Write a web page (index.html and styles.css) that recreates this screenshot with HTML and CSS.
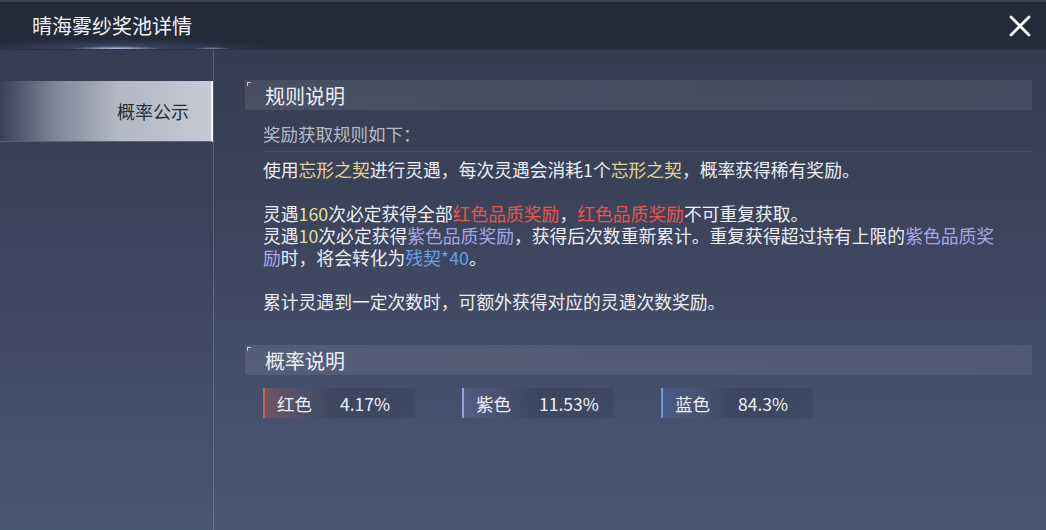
FILE: index.html
```html
<!DOCTYPE html>
<html lang="zh-CN">
<head>
<meta charset="utf-8">
<title>晴海雾纱奖池详情</title>
<link rel="stylesheet" href="styles.css">
</head>
<body>
<div class="app">
  <header class="topbar">
    <h1 class="title">晴海雾纱奖池详情</h1>
    <button class="close" aria-label="关闭">
      <svg width="22" height="22" viewBox="0 0 22 22"><path d="M2 2 L20 20 M20 2 L2 20" stroke="#ffffff" stroke-width="2.8" stroke-linecap="round" fill="none"/></svg>
    </button>
  </header>
  <div class="main">
    <aside class="sidebar">
      <div class="tab active">概率公示</div>
    </aside>
    <section class="content">
      <div class="sec-head">规则说明</div>
      <div class="sub">奖励获取规则如下：</div>
      <div class="rules">
        <p>使用<span class="y">忘形之契</span>进行灵遇，每次灵遇会消耗1个<span class="y">忘形之契</span>，概率获得稀有奖励。</p>
        <p>灵遇<span class="n">160</span>次必定获得全部<span class="r">红色品质奖励</span>，<span class="r">红色品质奖励</span>不可重复获取。<br>灵遇<span class="n">10</span>次必定获得<span class="p">紫色品质奖励</span>，获得后次数重新累计。重复获得超过持有上限的<span class="p">紫色品质奖励</span>时，将会转化为<span class="b">残契*40</span>。</p>
        <p>累计灵遇到一定次数时，可额外获得对应的灵遇次数奖励。</p>
      </div>
      <div class="sec-head sec-2">概率说明</div>
      <div class="chips">
        <div class="chip chip-red"><span class="lbl">红色</span><span class="val">4.17%</span></div>
        <div class="chip chip-purple"><span class="lbl">紫色</span><span class="val">11.53%</span></div>
        <div class="chip chip-blue"><span class="lbl">蓝色</span><span class="val">84.3%</span></div>
      </div>
    </section>
  </div>
</div>
</body>
</html>
```

FILE: styles.css
```css
* { box-sizing: border-box; }
html, body { margin: 0; padding: 0; }
body {
  width: 1046px;
  height: 530px;
  overflow: hidden;
  font-family: "Noto Sans CJK SC", "Noto Sans", sans-serif;
  background: linear-gradient(180deg, #343a4f 0%, #3a4259 35%, #44506b 75%, #4a5876 100%);
  color: #eceef3;
}
.app { width: 1046px; height: 530px; display: flex; flex-direction: column; }

.topbar {
  height: 50px;
  flex: none;
  display: flex;
  align-items: center;
  justify-content: space-between;
  padding: 0 15px 0 32px;
  border-top: 2px solid #3b4254;
  background:
    radial-gradient(ellipse 45px 3px at 117px 100%, rgba(200,215,255,0.9), rgba(200,215,255,0) 100%),
    radial-gradient(ellipse 20px 2px at 212px 100%, rgba(200,215,255,0.6), rgba(200,215,255,0) 100%),
    radial-gradient(ellipse 160px 10px at 117px 100%, rgba(120,140,200,0.35), rgba(120,140,200,0) 100%),
    #232a3a;
  border-bottom: 1px solid #2a3142;
}
.title {
  margin: 0;
  font-size: 20px;
  font-weight: 400;
  color: #f2f4f8;
  line-height: 1;
}
.close {
  width: 22px; height: 22px;
  padding: 0; margin: 0;
  border: 0; background: none;
  display: flex;
}

.main { flex: 1; display: flex; }

.sidebar {
  width: 214px;
  flex: none;
  padding-top: 31px;
  border-right: 1px solid rgba(200,210,235,0.22);
  background: linear-gradient(180deg, rgba(60,62,90,0.25), rgba(60,70,100,0.05));
}
.tab {
  height: 61px;
  display: flex;
  align-items: center;
  justify-content: flex-end;
  padding-right: 22px;
  font-size: 18px;
  color: #282c36;
  background: linear-gradient(90deg, rgba(60,66,90,0.2) 0%, #7d8296 25%, #b3b7c4 55%, #c7cad4 100%);
  border-right: 2px solid #f2f3f6;
  border-bottom: 1px solid #5c6170;
}

.content {
  flex: 1;
  padding: 30px 14px 0 31px;
}
.sec-head {
  height: 30px;
  display: flex;
  align-items: center;
  padding-left: 20px;
  font-size: 20px;
  color: #edeff4;
  background: linear-gradient(90deg, rgba(255,255,255,0.09), rgba(255,255,255,0.07));
  position: relative;
}
.sec-head::before {
  content: "";
  position: absolute;
  left: 2px; top: 2px;
  width: 3px; height: 3px;
  border-top: 1px solid rgba(255,255,255,0.7);
  border-left: 1px solid rgba(255,255,255,0.7);
}
.sub {
  margin: 12px 0 0 18px;
  font-size: 17.5px;
  line-height: 24px;
  color: #b7bbc8;
  padding-bottom: 5px;
  border-bottom: 1px solid rgba(255,255,255,0.07);
}
.rules {
  margin: 6px 30px 0 18px;
  font-size: 17.8px;
  line-height: 22px;
  color: #eceef3;
}
.rules p { margin: 0 0 22px 0; }
.rules p:last-child { margin-bottom: 0; }
.y { color: #e3d590; }
.n { color: #e6dca2; }
.r { color: #ec5548; }
.p { color: #a5a8e6; }
.b { color: #6f9de3; }

.sec-2 { margin-top: 33px; }

.chips {
  display: flex;
  gap: 47px;
  margin: 13px 0 0 18px;
}
.chip {
  width: 152px;
  height: 30px;
  display: flex;
  align-items: center;
  border-left: 2px solid;
  font-size: 17.5px;
  color: #eef0f5;
}
.lbl { width: 75px; padding-left: 12px; flex: none; }
.val { flex: none; }
.chip-red {
  border-color: #d0634f;
  background: linear-gradient(90deg, rgba(190,95,90,0.35) 0%, rgba(110,80,95,0.22) 25%, rgba(36,42,60,0.26) 50%, rgba(36,42,60,0.18) 100%);
}
.chip-purple {
  border-color: #9a9fe0;
  background: linear-gradient(90deg, rgba(120,120,190,0.3) 0%, rgba(80,85,130,0.2) 25%, rgba(36,42,60,0.26) 50%, rgba(36,42,60,0.18) 100%);
}
.chip-blue {
  border-color: #6e94da;
  background: linear-gradient(90deg, rgba(90,120,190,0.3) 0%, rgba(70,90,140,0.2) 25%, rgba(36,42,60,0.26) 50%, rgba(36,42,60,0.18) 100%);
}
```
